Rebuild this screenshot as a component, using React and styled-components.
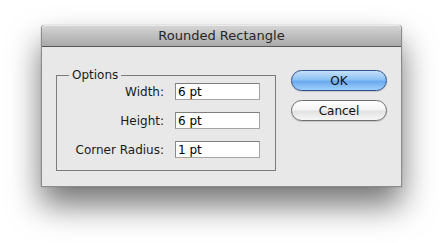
import React from 'react';
import styled, { createGlobalStyle } from 'styled-components';

const GlobalStyle = createGlobalStyle`
  html, body {
    margin: 0;
    padding: 0;
    background: #ffffff;
  }
`;

const Page = styled.div`
  width: 442px;
  height: 243px;
  padding: 25px 0 0 41px;
  box-sizing: border-box;
  font-family: 'DejaVu Sans', 'Lucida Grande', sans-serif;
  color: #1a1a1a;
`;

const Window = styled.div`
  width: 361px;
  border-radius: 4px 4px 0 0;
  background: #e8e8e8;
  box-shadow: 0 18px 32px rgba(0, 0, 0, 0.55), 0 0 1px rgba(0, 0, 0, 0.5);
  border: 1px solid #8c8c8c;
  border-top: none;
  box-sizing: border-box;
`;

const TitleBar = styled.div`
  height: 21px;
  border-bottom: 1px solid #585858;
  border-radius: 4px 4px 0 0;
  background: linear-gradient(#d6d6d6, #a9a9a9);
  box-shadow: inset 0 1px 0 #ececec;
  display: flex;
  align-items: center;
  justify-content: center;
  font-size: 13px;
  color: #262626;
`;

const Body = styled.div`
  display: flex;
  padding: 21px 14px 15px 14px;
  gap: 15px;
  align-items: flex-start;
`;

const Group = styled.fieldset`
  margin: 0;
  width: 220px;
  height: 103px;
  box-sizing: border-box;
  border: 1px solid #7c7c7c;
  padding: 0 15px 0 0;
  display: grid;
  grid-template-columns: 1fr 85px;
  column-gap: 11px;
  row-gap: 12px;
  align-content: start;
`;

const Legend = styled.legend`
  margin-left: 12px;
  padding: 0 3px;
  font-size: 12px;
  line-height: 15px;
  color: #1a1a1a;
`;

const Label = styled.label`
  font-size: 12px;
  text-align: right;
  align-self: center;
  white-space: nowrap;
`;

const Field = styled.input`
  width: 85px;
  height: 17px;
  box-sizing: border-box;
  border: 1px solid #a4a4a4;
  border-top-color: #7d7d7d;
  border-left-color: #8a8a8a;
  background: #fff;
  font-family: inherit;
  font-size: 12px;
  padding: 0 2px;
  color: #000;
  outline: none;
`;

const Buttons = styled.div`
  display: flex;
  flex-direction: column;
  gap: 9px;
  margin-top: 2px;
`;

const Button = styled.button`
  width: 96px;
  height: 21px;
  border-radius: 11px;
  font-family: inherit;
  font-size: 12px;
  color: #111;
  padding: 0;
  border: 1px solid ${p => (p.$primary ? '#2f4f8f' : '#6e6e6e')};
  background: ${p =>
    p.$primary
      ? 'linear-gradient(#c4e0fb 0%, #8ec2f3 45%, #6aaaf0 55%, #9fd0fb 100%)'
      : 'linear-gradient(#ffffff 0%, #f4f4f4 45%, #e2e2e2 55%, #f6f6f6 100%)'};
  box-shadow: 0 1px 1px rgba(0, 0, 0, 0.15);
`;

const fields = [
  { label: 'Width:', value: '6 pt' },
  { label: 'Height:', value: '6 pt' },
  { label: 'Corner Radius:', value: '1 pt' },
];

export default function App() {
  return (
    <Page>
      <GlobalStyle />
      <Window>
        <TitleBar>Rounded Rectangle</TitleBar>
        <Body>
          <Group>
            <Legend>Options</Legend>
            {fields.map(f => (
              <React.Fragment key={f.label}>
                <Label>{f.label}</Label>
                <Field defaultValue={f.value} />
              </React.Fragment>
            ))}
          </Group>
          <Buttons>
            <Button $primary>OK</Button>
            <Button>Cancel</Button>
          </Buttons>
        </Body>
      </Window>
    </Page>
  );
}
